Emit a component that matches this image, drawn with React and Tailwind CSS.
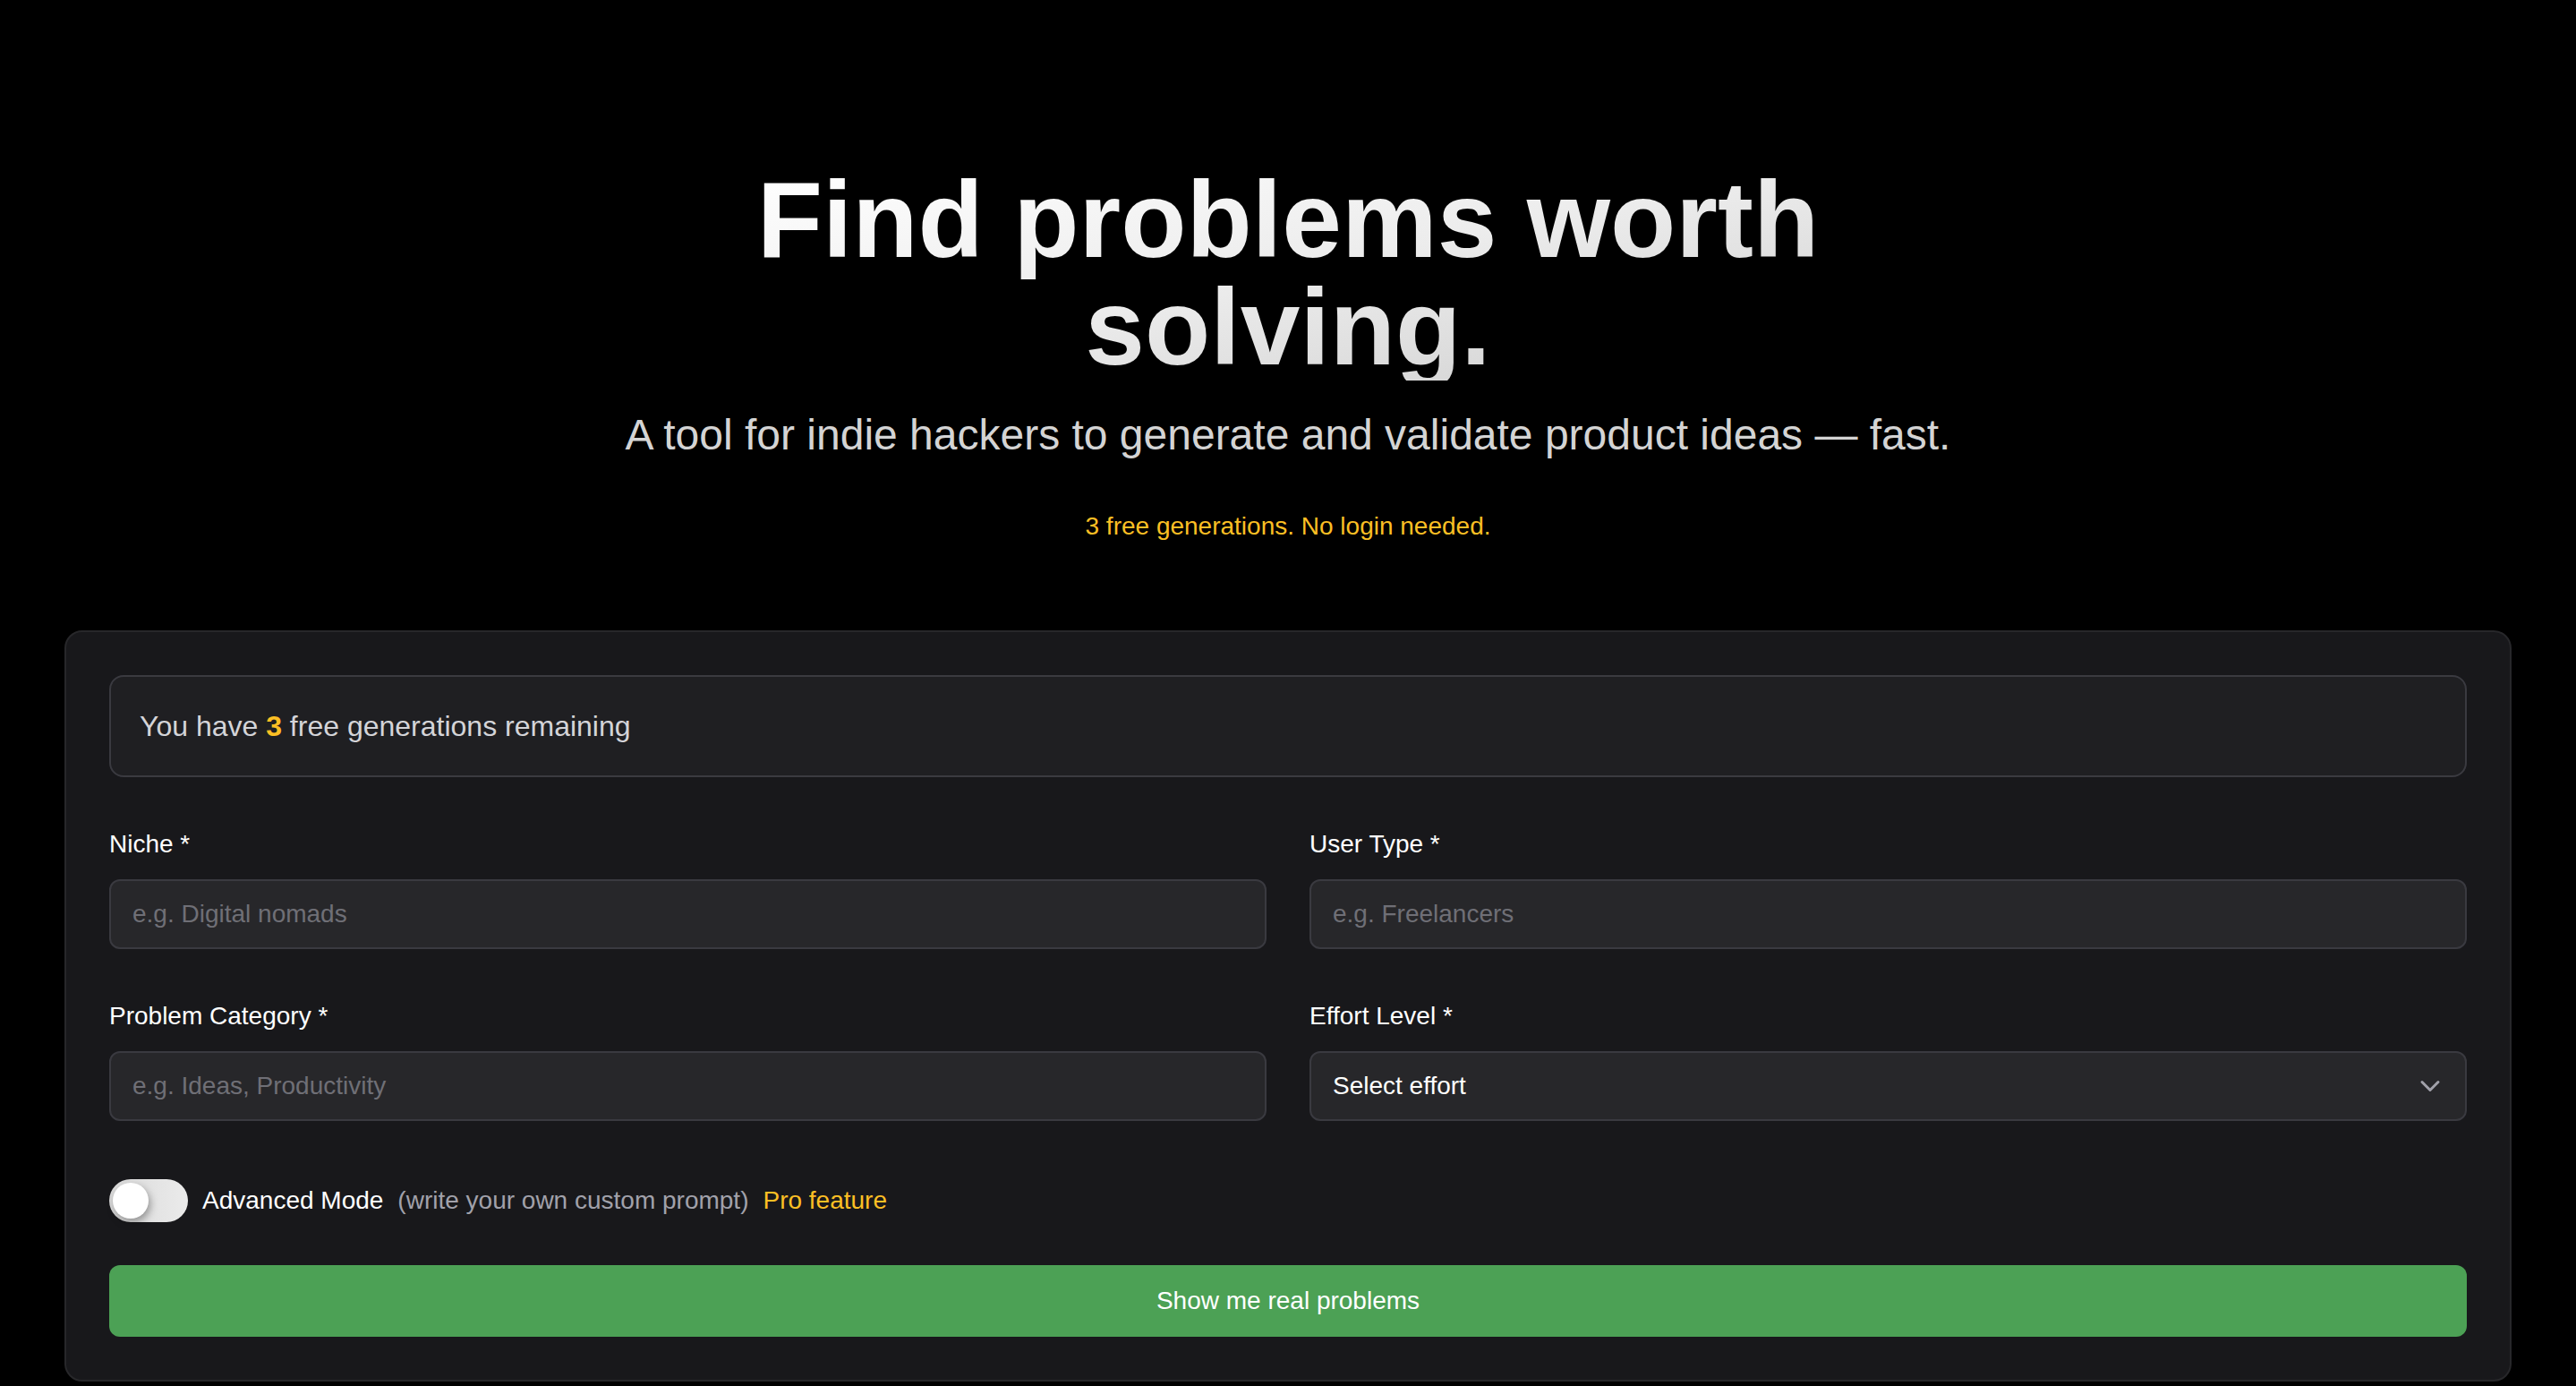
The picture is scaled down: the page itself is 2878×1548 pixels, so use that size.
import { useState } from 'react';
import { ChevronDown } from 'lucide-react';

const font = { fontFamily: '"Liberation Sans", Arial, sans-serif' };

function Field({ label, placeholder }) {
  return (
    <div>
      <label className="block text-[28px] leading-[40px] text-white mb-[19px]">{label}</label>
      <input
        placeholder={placeholder}
        className="w-full h-[78px] rounded-[12px] border-2 border-[#3a3a40] bg-[#27272a] px-[24px] text-[28px] text-white placeholder:text-[#6f6f76] outline-none"
      />
    </div>
  );
}

export default function App() {
  const [advanced, setAdvanced] = useState(false);

  return (
    <div className="min-h-screen bg-black text-white" style={font}>
      <div className="pt-[185px] px-[72px]">
        <div className="flex flex-col items-center text-center">
          <h1 className="text-[120px] leading-[120px] font-bold bg-gradient-to-br from-white via-[#ececec] to-[#cfcfcf] bg-clip-text text-transparent">
            Find problems worth
            <br />
            solving.
          </h1>
          <p className="mt-[29px] text-[48px] leading-[64px] text-[#d4d4d4]">
            A tool for indie hackers to generate and validate product ideas — fast.
          </p>
          <p className="mt-[50px] text-[28px] leading-[40px] text-[#fbbf24]">
            3 free generations. No login needed.
          </p>
        </div>

        <div className="mt-[96px] rounded-[20px] border-2 border-[#27272a] bg-[#18181b] p-[48px]">
          <div className="rounded-[16px] border-2 border-[#3a3a40] bg-[#1f1f22] px-[32px] py-[31px] text-[32px] leading-[48px] text-[#d4d4d8]">
            You have <span className="font-bold text-[#fbbf24]">3</span> free generations remaining
          </div>

          <div className="mt-[55px] grid grid-cols-2 gap-x-[48px] gap-y-[55px]">
            <Field label="Niche *" placeholder="e.g. Digital nomads" />
            <Field label="User Type *" placeholder="e.g. Freelancers" />
            <Field label="Problem Category *" placeholder="e.g. Ideas, Productivity" />
            <div>
              <label className="block text-[28px] leading-[40px] text-white mb-[19px]">Effort Level *</label>
              <div className="relative">
                <select className="w-full h-[78px] appearance-none rounded-[12px] border-2 border-[#3a3a40] bg-[#27272a] pl-[24px] pr-[64px] text-[28px] text-white outline-none">
                  <option>Select effort</option>
                  <option>Low</option>
                  <option>Medium</option>
                  <option>High</option>
                </select>
                <ChevronDown
                  className="pointer-events-none absolute right-[23px] top-1/2 -translate-y-1/2 h-[36px] w-[36px] text-[#a1a1aa]"
                  strokeWidth={2}
                />
              </div>
            </div>
          </div>

          <div className="mt-[65px] flex items-center gap-[16px] text-[28px] leading-[40px]">
            <button
              type="button"
              onClick={() => setAdvanced(!advanced)}
              className="relative flex h-[48px] w-[88px] shrink-0 items-center rounded-full bg-gradient-to-r from-[#d9d9d9] to-[#ebebeb] px-[4px]"
            >
              <span className={`h-[40px] w-[40px] rounded-full bg-white shadow-[2px_4px_8px_rgba(0,0,0,0.35)] ${advanced ? 'ml-auto' : ''}`} />
            </button>
            <span className="text-white">Advanced Mode</span>
            <span className="text-[#a1a1aa]">(write your own custom prompt)</span>
            <span className="text-[#fbbf24]">Pro feature</span>
          </div>

          <button
            type="button"
            className="mt-[48px] w-full h-[80px] rounded-[12px] bg-[#4ca155] text-[28px] text-white"
          >
            Show me real problems
          </button>
        </div>
      </div>
    </div>
  );
}
